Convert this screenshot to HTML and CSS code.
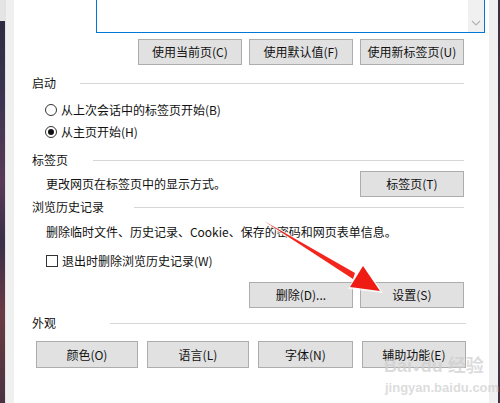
FILE: index.html
```html
<!DOCTYPE html>
<html lang="zh-CN">
<head>
  <meta charset="UTF-8">
  <title>Internet 选项</title>
  <link rel="stylesheet" href="styles.css">
</head>
<body>

  <div class="screen">
    <div class="backdrop backdrop-left"><div class="backdrop-cap"></div></div>

    <div class="frame">
      <div class="dialog">

        <div class="homepage-box">
          <div class="scrollbar">
            <svg class="chevron" width="10" height="6" viewBox="0 0 10 6">
              <path d="M1 1 L5 5 L9 1" fill="none" stroke="#b4b4b4" stroke-width="1.2"/>
            </svg>
          </div>
        </div>

        <div class="btn-row btn-row-top">
          <button class="btn">使用当前页(C)</button>
          <button class="btn">使用默认值(F)</button>
          <button class="btn">使用新标签页(U)</button>
        </div>

        <div class="group-title title-startup">
          <span>启动</span>
          <div class="rule"></div>
        </div>

        <label class="option option-first">
          <span class="radio"></span>
          从上次会话中的标签页开始(B)
        </label>
        <label class="option">
          <span class="radio checked"></span>
          从主页开始(H)
        </label>

        <div class="group-title title-tabs">
          <span>标签页</span>
          <div class="rule"></div>
        </div>

        <div class="desc-row">
          <span class="desc">更改网页在标签页中的显示方式。</span>
          <button class="btn">标签页(T)</button>
        </div>

        <div class="group-title title-history">
          <span>浏览历史记录</span>
          <div class="rule"></div>
        </div>

        <div class="desc desc-history">删除临时文件、历史记录、Cookie、保存的密码和网页表单信息。</div>

        <label class="option option-check">
          <span class="checkbox"></span>
          退出时删除浏览历史记录(W)
        </label>

        <div class="btn-row btn-row-history">
          <button class="btn">删除(D)...</button>
          <button class="btn">设置(S)</button>
        </div>

        <div class="group-title title-look">
          <span>外观</span>
          <div class="rule"></div>
        </div>

        <div class="look-row">
          <button class="btn btn-color">颜色(O)</button>
          <button class="btn btn-lang">语言(L)</button>
          <button class="btn btn-font">字体(N)</button>
          <button class="btn btn-access">辅助功能(E)</button>
        </div>

      </div>
    </div>

    <div class="backdrop backdrop-right"></div>

    <!-- annotation arrow drawn over the dialog -->
    <svg class="arrow" width="500" height="403" viewBox="0 0 500 403">
      <polygon points="262,221 264,220 357,272 352,281" fill="#fff" opacity="0.7"/>
      <polygon points="264,221 355,273 353,279" fill="#f2261c"/>
      <polygon points="383,293 348,289 363,263" fill="#fff" opacity="0.7"/>
      <polygon points="380,291 350,287 363,266" fill="#ee1c12"/>
    </svg>

    <div class="watermark">
      <div class="wm-logo">Bai<span class="wm-paw">●</span>du 经验</div>
      <div class="wm-url">jingyan.baidu.com</div>
    </div>
  </div>

</body>
</html>
```

FILE: styles.css
```css
body {
  margin: 0;
  padding: 0;
  font-family: "Noto Sans CJK SC", "Liberation Sans", sans-serif;
  font-size: 12px;
  color: #111;
}

.screen {
  position: relative;
  width: 500px;
  height: 403px;
  display: flex;
  overflow: hidden;
}

.backdrop {
  height: 100%;
  background: linear-gradient(180deg, #2a2a3e 0%, #3c3452 25%, #5a3a58 45%, #3a2e48 60%, #6a3a44 78%, #4a3240 100%);
}

.backdrop-left {
  width: 7px;
}

.backdrop-cap {
  height: 21px;
  background: #e4e4e4;
}

.backdrop-right {
  width: 3px;
  background: linear-gradient(180deg, #3a3040 0%, #5a3a48 60%, #3e3040 100%);
}

.frame {
  flex: 1;
  display: flex;
  background: #f0f0f0;
  padding: 0 9px 0 8px;
  border-left: 1px solid #e2e2e2;
}

.dialog {
  flex: 1;
  background: #ffffff;
  padding: 0 25px 0 18px;
  display: flex;
  flex-direction: column;
}

.homepage-box {
  height: 32px;
  margin-left: 64px;
  margin-right: -21px;
  border: 1px solid #0078d7;
  border-top: none;
  display: flex;
  justify-content: flex-end;
}

.scrollbar {
  width: 16px;
  background: #f0f0f0;
  display: flex;
  align-items: flex-end;
  justify-content: center;
  padding-bottom: 6px;
  box-sizing: border-box;
}

.btn {
  font-family: "Noto Sans CJK SC", "Liberation Sans", sans-serif;
  font-size: 12px;
  color: #111;
  background: #e1e1e1;
  border: 1px solid #adadad;
  height: 26px;
  width: 104px;
  padding: 0;
  line-height: 24px;
}

.btn-row {
  display: flex;
  justify-content: flex-end;
  gap: 7px;
}

.btn-row-top {
  margin-top: 6px;
}

.btn-row-history {
  margin-top: 10px;
}

.group-title {
  height: 20px;
  display: flex;
  align-items: center;
  line-height: 20px;
}

.rule {
  flex: 1;
  height: 1px;
  background: #d6d6d6;
}

.title-startup {
  margin-top: 8px;
}

.title-startup .rule {
  margin-left: 24px;
}

.title-tabs {
  margin-top: 7px;
}

.title-tabs .rule {
  margin-left: 25px;
}

.title-history .rule {
  margin-left: 30px;
}

.title-look {
  margin-top: 5px;
  margin-right: -2px;
}

.title-look .rule {
  margin-left: 54px;
}

.option {
  height: 22px;
  display: flex;
  align-items: center;
  padding-left: 13px;
  line-height: 22px;
}

.option-first {
  margin-top: 6px;
}

.radio {
  width: 12px;
  height: 12px;
  border: 1px solid #333;
  border-radius: 50%;
  margin-right: 4px;
  box-sizing: border-box;
  position: relative;
  flex: none;
}

.radio.checked::after {
  content: "";
  position: absolute;
  left: 2px;
  top: 2px;
  width: 6px;
  height: 6px;
  border-radius: 50%;
  background: #111;
}

.desc-row {
  height: 26px;
  margin-top: 1px;
  display: flex;
  align-items: center;
  justify-content: space-between;
}

.desc {
  padding-left: 14px;
  line-height: 20px;
}

.desc-history {
  height: 20px;
  margin-top: 5px;
}

.option-check {
  margin-top: 8px;
  padding-left: 14px;
}

.checkbox {
  width: 12px;
  height: 12px;
  border: 1px solid #333;
  box-sizing: border-box;
  margin-right: 4px;
  flex: none;
}

.look-row {
  display: flex;
  gap: 9px;
  margin-top: 8px;
  margin-left: 4px;
  margin-right: -2px;
}

.look-row .btn {
  height: 27px;
}

.btn-color,
.btn-lang {
  width: 102px;
}

.btn-font {
  width: 95px;
}

.btn-access {
  width: 104px;
}

.arrow {
  position: absolute;
  left: 0;
  top: 0;
  pointer-events: none;
}

.watermark {
  position: absolute;
  left: 384px;
  top: 356px;
  color: rgba(205, 205, 205, 0.7);
  font-family: "Liberation Sans", "Noto Sans CJK SC", sans-serif;
  pointer-events: none;
}

.wm-logo {
  font-size: 18px;
  font-weight: bold;
  line-height: 20px;
}

.wm-paw {
  font-size: 11px;
  margin: 0 1px;
}

.wm-url {
  font-size: 13px;
  font-weight: bold;
  line-height: 16px;
  margin-left: 1px;
  margin-top: 2px;
}
```
